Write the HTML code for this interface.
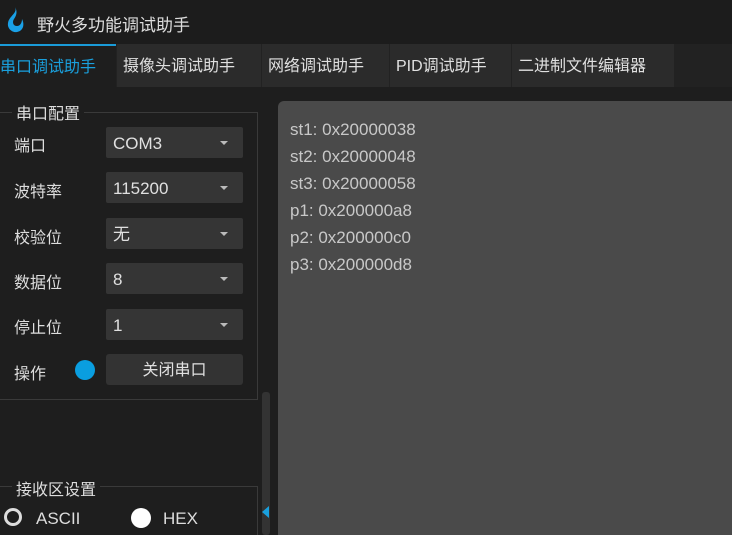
<!DOCTYPE html>
<html><head><meta charset="utf-8"><style>
*{margin:0;padding:0;box-sizing:border-box}
html,body{width:732px;height:535px;overflow:hidden}
body{background:#1e1e1e;position:relative;font-family:"Liberation Sans","Noto Sans CJK SC",sans-serif;color:#ddd}
.abs{position:absolute}
.title{left:0;top:0;width:732px;height:44px;background:#1c1c1c;font-size:17px;color:#ddd}
.tabs{left:0;top:44px;width:732px;height:43px;background:#222}
.tab{position:absolute;top:0;height:43px;background:#2b2b2b;font-size:16px;line-height:46px;color:#e0e0e0;padding-left:6px}
.lbl{font-size:16px;color:#ddd}
.cb{position:absolute;left:106px;width:137px;height:31px;background:#353535;border-radius:2px;font-size:17px;line-height:33px;padding-left:7px;color:#e0e0e0}
.cb:after{content:"";position:absolute;right:15px;top:14px;border-left:4px solid transparent;border-right:4px solid transparent;border-top:4px solid #bbb}
.out{font-size:17px;color:#c8c8c8;line-height:27px}
</style></head><body>
<div class="abs title">
<svg class="abs" style="left:5px;top:7px" width="20" height="26" viewBox="0 0 20 26"><path d="M10 0 C13 6 4 9 3 16 C2 22 8 26 12 25 C18 24 20 18 17 12 C17 16 15 19 12 19 C8 19 7 15 9 12 C11 9 13 5 10 0Z" fill="#1aa0e6"/></svg>
<div class="abs" style="left:37px;top:11px">野火多功能调试助手</div>
</div>
<div class="abs tabs">
<div class="tab" style="left:0;width:116px;background:#1e1e1e;color:#1aa0dd;border-top:2px solid #1a9bd8;line-height:44px;padding-left:0">串口调试助手</div>
<div class="tab" style="left:117px;width:144px">摄像头调试助手</div>
<div class="tab" style="left:262px;width:127px">网络调试助手</div>
<div class="tab" style="left:390px;width:121px">PID调试助手</div>
<div class="tab" style="left:512px;width:162px">二进制文件编辑器</div>
</div>
<div class="abs" style="left:-2px;top:112px;width:260px;height:288px;border:1px solid #3a3a3a"></div>
<div class="abs lbl" style="left:12px;top:100px;background:#1e1e1e;padding:0 4px">串口配置</div>
<div class="abs lbl" style="left:14px;top:132px">端口</div>
<div class="abs lbl" style="left:14px;top:178px">波特率</div>
<div class="abs lbl" style="left:14px;top:224px">校验位</div>
<div class="abs lbl" style="left:14px;top:269px">数据位</div>
<div class="abs lbl" style="left:14px;top:314px">停止位</div>
<div class="abs lbl" style="left:14px;top:360px">操作</div>
<div class="cb" style="top:127px">COM3</div>
<div class="cb" style="top:172px">115200</div>
<div class="cb" style="top:218px">无</div>
<div class="cb" style="top:263px">8</div>
<div class="cb" style="top:309px">1</div>
<div class="abs" style="left:75px;top:360px;width:20px;height:20px;border-radius:50%;background:#0a9ee0"></div>
<div class="abs" style="left:106px;top:354px;width:137px;height:31px;background:#333;border-radius:3px;font-size:16px;line-height:33px;text-align:center;color:#e0e0e0">关闭串口</div>
<div class="abs" style="left:262px;top:392px;width:8px;height:143px;background:#333;border-radius:3px"></div>
<div class="abs" style="left:262px;top:506px;border-top:6px solid transparent;border-bottom:6px solid transparent;border-right:7px solid #1aa0dd"></div>
<div class="abs" style="left:-2px;top:486px;width:260px;height:60px;border:1px solid #3a3a3a"></div>
<div class="abs lbl" style="left:12px;top:476px;background:#1e1e1e;padding:0 4px">接收区设置</div>
<div class="abs" style="left:4px;top:508px;width:18px;height:18px;border-radius:50%;border:3px solid #ddd"></div>
<div class="abs lbl" style="left:36px;top:509px;font-size:17px">ASCII</div>
<div class="abs" style="left:131px;top:508px;width:20px;height:20px;border-radius:50%;background:#fff"></div>
<div class="abs lbl" style="left:163px;top:509px;font-size:17px">HEX</div>
<div class="abs" style="left:278px;top:101px;width:460px;height:440px;background:#4a4a4a;border-radius:6px;padding:15px 0 0 12px">
<div class="out">st1: 0x20000038<br>st2: 0x20000048<br>st3: 0x20000058<br>p1: 0x200000a8<br>p2: 0x200000c0<br>p3: 0x200000d8</div>
</div>
</body></html>
